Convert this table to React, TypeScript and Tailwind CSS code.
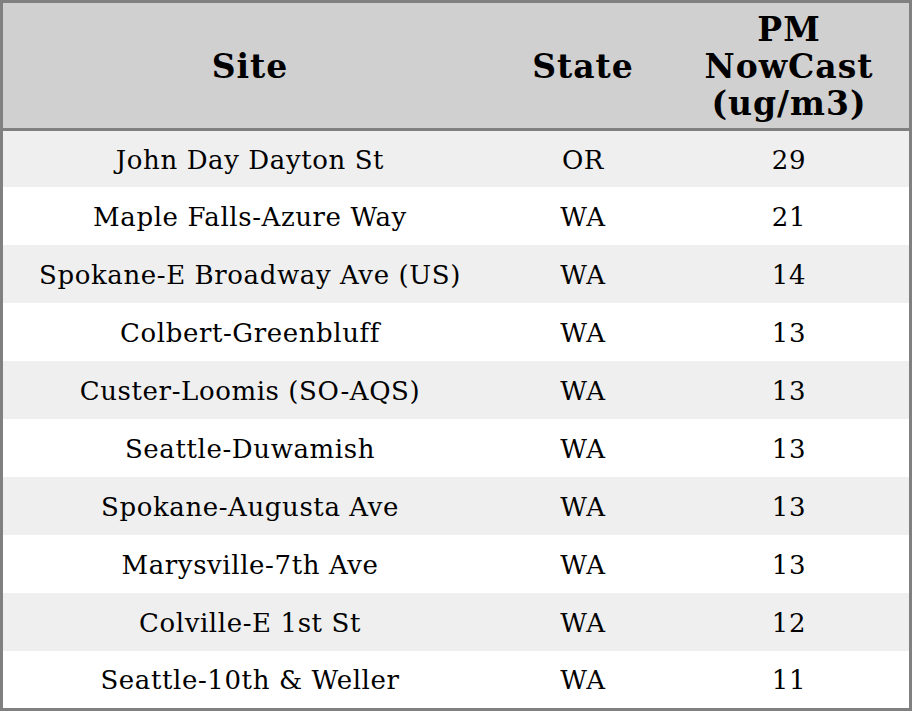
const rows: [string, string, number][] = [
  ["John Day Dayton St", "OR", 29],
  ["Maple Falls-Azure Way", "WA", 21],
  ["Spokane-E Broadway Ave (US)", "WA", 14],
  ["Colbert-Greenbluff", "WA", 13],
  ["Custer-Loomis (SO-AQS)", "WA", 13],
  ["Seattle-Duwamish", "WA", 13],
  ["Spokane-Augusta Ave", "WA", 13],
  ["Marysville-7th Ave", "WA", 13],
  ["Colville-E 1st St", "WA", 12],
  ["Seattle-10th & Weller", "WA", 11],
];

export default function App() {
  return (
    <div className="w-[912px] h-[711px] bg-white border-[3px] border-[#808080] flex flex-col text-black font-['DejaVu_Serif',serif]">
      <div className="grid grid-cols-[494px_172px_240px] h-[128px] pt-[2px] bg-[#d0d0d0] border-b-[3px] border-[#808080] font-bold text-[33px] leading-[37px] tracking-[1px] items-center text-center">
        <div>Site</div>
        <div>State</div>
        <div>
          PM
          <br />
          NowCast
          <br />
          (ug/m3)
        </div>
      </div>
      <div className="flex-1 flex flex-col">
        {rows.map(([site, state, value], i) => (
          <div
            key={site}
            className={
              "grid grid-cols-[494px_172px_240px] items-center text-center text-[26px] tracking-[0.6px] pt-[2px] " +
              (i === 0 ? "h-[56px] " : i === rows.length - 1 ? "flex-1 " : "h-[58px] ") +
              (i % 2 === 0 ? "bg-[#efefef]" : "bg-white")
            }
          >
            <div>{site}</div>
            <div>{state}</div>
            <div>{value}</div>
          </div>
        ))}
      </div>
    </div>
  );
}
